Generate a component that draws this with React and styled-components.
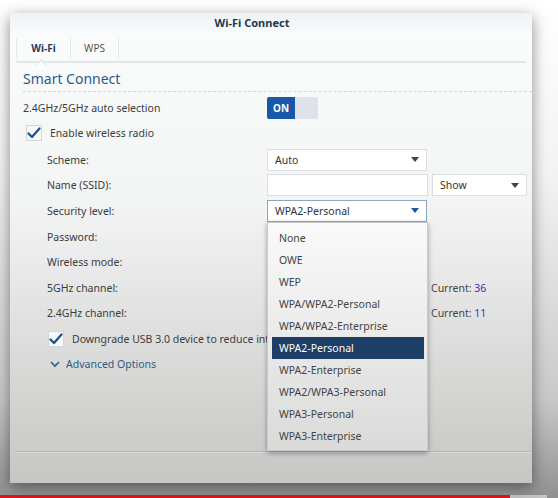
import styled, { createGlobalStyle } from "styled-components"

const Global = createGlobalStyle`
html, body {
    margin: 0;
    padding: 0;
}
body {
    font-family: "Noto Sans", "DejaVu Sans", sans-serif;
    font-size: 10.5px;
    color: #3a3d40;
}
`

const securityLevels = [
    "None",
    "OWE",
    "WEP",
    "WPA/WPA2-Personal",
    "WPA/WPA2-Enterprise",
    "WPA2-Personal",
    "WPA2-Enterprise",
    "WPA2/WPA3-Personal",
    "WPA3-Personal",
    "WPA3-Enterprise",
]

function Check() {
    return (
        <svg width="14" height="12" viewBox="0 0 14 12">
            <path d="M1.5 6.5 L5 10 L12.5 1.5" fill="none" stroke="#1b4f8c" strokeWidth="2.2" strokeLinecap="round" strokeLinejoin="round" />
        </svg>
    )
}

function Caret({ color }) {
    return (
        <svg width="8" height="5" viewBox="0 0 8 5">
            <path d="M0 0 L8 0 L4 5 Z" fill={color || "#444"} />
        </svg>
    )
}

export default function App() {
    return (
        <Page>
            <Global />
            <Dialog>
                <TitleBar>Wi-Fi Connect</TitleBar>
                <Tabs>
                    <Tab $active>Wi-Fi</Tab>
                    <Tab>WPS</Tab>
                </Tabs>
                <Body>
                    <Heading>Smart Connect</Heading>
                    <TopRow>
                        <span>2.4GHz/5GHz auto selection</span>
                        <Toggle>
                            <ToggleOn>ON</ToggleOn>
                            <ToggleOff />
                        </Toggle>
                    </TopRow>
                    <CheckRow>
                        <CheckBox><Check /></CheckBox>
                        <span>Enable wireless radio</span>
                    </CheckRow>
                    <Form>
                        <Label>Scheme:</Label>
                        <Field>
                            <Select>Auto<Caret /></Select>
                        </Field>
                        <Label>Name (SSID):</Label>
                        <Field>
                            <Input />
                            <Select $width="95px">Show<Caret /></Select>
                        </Field>
                        <Label>Security level:</Label>
                        <Field>
                            <SelectWrap>
                                <Select $focus>WPA2-Personal<Caret color="#1d56a3" /></Select>
                                <Menu>
                                    {securityLevels.map((level) => (
                                        <MenuItem key={level} $selected={level === "WPA2-Personal"}>{level}</MenuItem>
                                    ))}
                                </Menu>
                            </SelectWrap>
                        </Field>
                        <Label>Password:</Label>
                        <Field />
                        <Label>Wireless mode:</Label>
                        <Field />
                        <Label>5GHz channel:</Label>
                        <Field><Current>Current: <b>36</b></Current></Field>
                        <Label>2.4GHz channel:</Label>
                        <Field><Current>Current: <b>11</b></Current></Field>
                    </Form>
                    <SubCheckRow>
                        <CheckBox><Check /></CheckBox>
                        <Clipped>Downgrade USB 3.0 device to reduce interference</Clipped>
                    </SubCheckRow>
                    <Advanced>
                        <svg width="10" height="7" viewBox="0 0 10 7">
                            <path d="M1 1 L5 5 L9 1" fill="none" stroke="#2d5b8f" strokeWidth="1.6" />
                        </svg>
                        <span>Advanced Options</span>
                    </Advanced>
                </Body>
                <Footer />
            </Dialog>
            <Progress>
                <Played />
                <Buffered />
            </Progress>
        </Page>
    )
}

const Page = styled.div`
height: 498px;
display: flex;
flex-direction: column;
overflow: hidden;
background: linear-gradient(to bottom, #ffffff 0%, #f3f3f3 35%, #c9c9c9 80%, #8f908f 100%);
`

const Dialog = styled.div`
margin: 13px 0 0 10px;
width: 522px;
height: 470px;
display: flex;
flex-direction: column;
background: linear-gradient(to bottom, #fbfcfc 0%, #f3f4f4 40%, #d9dad8 75%, #c6c7c5 100%);
box-shadow: 0 4px 14px rgba(0, 0, 0, 0.45);
position: relative;
`

const TitleBar = styled.div`
height: 20px;
line-height: 20px;
text-align: center;
padding-right: 38px;
font-weight: bold;
font-size: 11px;
color: #1e3550;
background: linear-gradient(to bottom, #eef3f7, #f8fafb);
`

const Tabs = styled.div`
height: 28px;
margin: 0 6px;
display: flex;
align-items: stretch;
border-bottom: 2px solid #e4e7e9;
`

const Tab = styled.div`
width: ${(p) => (p.$active ? "53px" : "47px")};
display: flex;
align-items: center;
justify-content: center;
font-size: 10px;
font-weight: ${(p) => (p.$active ? "bold" : "normal")};
color: ${(p) => (p.$active ? "#1e3a5c" : "#555")};
border-left: ${(p) => (p.$active ? "1px solid #e6e9eb" : "none")};
border-right: 1px solid #e6e9eb;
margin: 5px 0 3px;
position: relative;
&::after {
    content: "";
    display: ${(p) => (p.$active ? "block" : "none")};
    position: absolute;
    left: 20px;
    bottom: -11px;
    width: 7px;
    height: 7px;
    background: #fbfcfc;
    border-left: 1px solid #dfe2e4;
    border-top: 1px solid #dfe2e4;
    transform: rotate(45deg);
}
`

const Body = styled.div`
flex: 1;
padding: 6px 0 0 13px;
display: flex;
flex-direction: column;
`

const Heading = styled.div`
font-size: 14px;
color: #2d5a8c;
padding-bottom: 3px;
border-bottom: 1px dashed #d2d6d9;
`

const TopRow = styled.div`
display: flex;
align-items: center;
margin-top: 5px;
& > span:first-child {
    width: 244px;
}
`

const Toggle = styled.div`
width: 51px;
height: 22px;
display: flex;
border-radius: 2px;
overflow: hidden;
`

const ToggleOn = styled.div`
width: 28px;
background: #1958a7;
color: #fff;
font-weight: bold;
font-size: 10px;
display: flex;
align-items: center;
justify-content: center;
`

const ToggleOff = styled.div`
flex: 1;
background: #dde3e9;
`

const CheckRow = styled.div`
display: flex;
align-items: center;
gap: 8px;
margin: 4px 0 0 3px;
height: 20px;
`

const CheckBox = styled.div`
width: 14px;
height: 14px;
border: 1px solid #d3d6d9;
background: #f7f8f9;
display: flex;
align-items: center;
justify-content: center;
flex-shrink: 0;
`

const Form = styled.div`
display: grid;
grid-template-columns: 220px 1fr;
grid-auto-rows: 25.6px;
margin: 4px 0 0 24px;
`

const Label = styled.div`
display: flex;
align-items: center;
`

const Field = styled.div`
display: flex;
align-items: center;
gap: 4px;
`

const Select = styled.div`
box-sizing: border-box;
width: ${(p) => p.$width || "160px"};
height: 22px;
padding: 0 7px 0 7px;
display: flex;
align-items: center;
justify-content: space-between;
background: #fff;
border: 1px solid ${(p) => (p.$focus ? "#8fa6c0" : "#dcdfe2")};
color: #333;
`

const Input = styled.div`
box-sizing: border-box;
width: 161px;
height: 22px;
background: #fff;
border: 1px solid #dcdfe2;
`

const SelectWrap = styled.div`
position: relative;
`

const Menu = styled.div`
position: absolute;
left: 0;
top: 22px;
width: 161px;
box-sizing: border-box;
padding: 4px 3px 3px 4px;
background: linear-gradient(to bottom, #fafafa, #dadbd9);
border: 1px solid #c9cbcc;
box-shadow: 0 2px 5px rgba(0, 0, 0, 0.35);
z-index: 2;
`

const MenuItem = styled.div`
height: 22px;
line-height: 22px;
padding-left: 7px;
color: ${(p) => (p.$selected ? "#fff" : "#444")};
background: ${(p) => (p.$selected ? "#1d3e67" : "transparent")};
`

const Current = styled.div`
margin-left: 164px;
white-space: nowrap;
color: #444;
& b {
    font-weight: normal;
    color: #3438b4;
}
`

const SubCheckRow = styled.div`
display: flex;
align-items: center;
gap: 8px;
margin: 3px 0 0 25px;
height: 20px;
white-space: nowrap;
`

const Clipped = styled.span`
width: 195px;
overflow: hidden;
`

const Advanced = styled.div`
display: flex;
align-items: center;
gap: 6px;
margin: 8px 0 0 27px;
color: #2d5a8c;
`

const Footer = styled.div`
height: 31px;
margin: 0 0 0 6px;
border-top: 1px solid #b9bab8;
box-shadow: 0 1px 0 #d6d7d5 inset;
`

const Progress = styled.div`
margin-top: auto;
height: 3px;
display: flex;
`

const Played = styled.div`
width: 510px;
background: #e5141b;
`

const Buffered = styled.div`
width: 37px;
background: #c4c4c4;
`
